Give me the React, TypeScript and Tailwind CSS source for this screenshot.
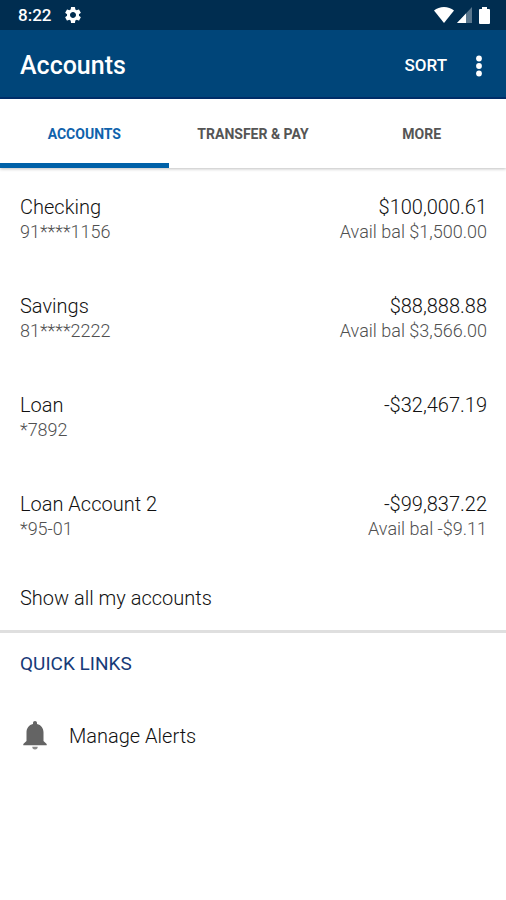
import { MdSettings } from "react-icons/md";

const tabs = ["Accounts", "Transfer & Pay", "More"];

const accounts = [
    { name: "Checking", number: "91****1156", balance: "$100,000.61", available: "Avail bal $1,500.00" },
    { name: "Savings", number: "81****2222", balance: "$88,888.88", available: "Avail bal $3,566.00" },
    { name: "Loan", number: "*7892", balance: "-$32,467.19", available: "" },
    { name: "Loan Account 2", number: "*95-01", balance: "-$99,837.22", available: "Avail bal -$9.11" },
];

function StatusBar() {
    return (
        <div className="flex h-[30px] items-center justify-between bg-[#002d50] pl-[18px] pr-4 text-white">
            <div className="flex items-center gap-3">
                <span className="text-[17px] leading-5 font-medium">8:22</span>
                <MdSettings size={20} />
            </div>
            <div className="flex items-center gap-[3px]">
                <svg width="20" height="16" viewBox="0 0 20 16" fill="currentColor">
                    <path d="M0 3.5C2.8 1.3 6.2 0 10 0s7.2 1.3 10 3.5L10 16z" />
                </svg>
                <svg width="15" height="16" viewBox="0 0 15 16" fill="currentColor">
                    <path d="M15 0v16H0z" opacity="0.35" />
                    <path d="M9 6.4V16H0z" />
                </svg>
                <svg className="ml-1" width="11" height="17" viewBox="0 0 11 17" fill="currentColor">
                    <path d="M3 0h5v2h2q1 0 1 1v13q0 1-1 1H1q-1 0-1-1V3q0-1 1-1h2z" />
                </svg>
            </div>
        </div>
    );
}

export default function App() {
    return (
        <div className="min-h-screen bg-white font-['Roboto',sans-serif] text-[#111111]">
            <StatusBar />

            <header className="flex h-[69px] items-center justify-between border-b-2 border-[#002f6b] bg-[#004579] pt-1 pl-5 pr-[15px] text-white">
                <h1 className="text-[25px] leading-8 font-medium">Accounts</h1>
                <div className="flex items-center gap-5">
                    <button className="text-[17px] font-medium">SORT</button>
                    <button aria-label="More options" className="flex w-6 justify-center py-2">
                        <svg width="6" height="22" viewBox="0 0 6 22" fill="currentColor">
                            <circle cx="3" cy="3.5" r="2.9" />
                            <circle cx="3" cy="11" r="2.9" />
                            <circle cx="3" cy="18.5" r="2.9" />
                        </svg>
                    </button>
                </div>
            </header>

            <nav className="grid h-[69px] grid-cols-3 shadow-[0_1px_3px_rgba(0,0,0,0.25)]">
                {tabs.map((tab, index) => (
                    <button
                        key={tab}
                        className={
                            index === 0
                                ? "border-y-[5px] border-t-transparent border-b-[#0061a8] text-sm font-bold uppercase text-[#0f62ac]"
                                : "border-y-[5px] border-transparent text-sm font-bold uppercase text-[#555555]"
                        }
                    >
                        {tab}
                    </button>
                ))}
            </nav>

            <main className="font-light">
                <ul>
                    {accounts.map((account) => (
                        <li key={account.name} className="flex h-[99px] items-start justify-between pt-[27px] pl-5 pr-[19px]">
                            <div>
                                <p className="text-xl leading-[25px]">{account.name}</p>
                                <p className="text-lg leading-6 text-[#505050]">{account.number}</p>
                            </div>
                            <div className="text-right">
                                <p className="text-xl leading-[25px]">{account.balance}</p>
                                <p className="text-lg leading-6 text-[#505050]">{account.available}</p>
                            </div>
                        </li>
                    ))}
                </ul>

                <button className="block w-full px-5 pt-5 pb-[18px] text-left text-xl">Show all my accounts</button>

                <section className="border-t-[3px] border-[#dfdfdf] px-5 pt-[17px]">
                    <h2 className="text-[19px] leading-7 font-normal text-[#173a78]">QUICK LINKS</h2>
                    <a href="#alerts" className="mt-[43px] flex items-center gap-[19px] text-xl">
                        <svg width="30" height="30" viewBox="0 0 30 30" fill="#646464">
                            <path d="M15 0c-1.2 0-2 .8-2 2v.9C8.900 3.800 6.500 7 6.500 11.500V20L3.300 23v1.300h23.400V23l-3.200-3v-8.500c0-4.500-2.400-7.700-6.500-8.600V2c0-1.200-.8-2-2-2z" />
                            <path d="M12.300 25.800a2.700 2.700 0 0 0 5.400 0z" opacity="0.75" />
                        </svg>
                        Manage Alerts
                    </a>
                </section>
            </main>
        </div>
    );
}
